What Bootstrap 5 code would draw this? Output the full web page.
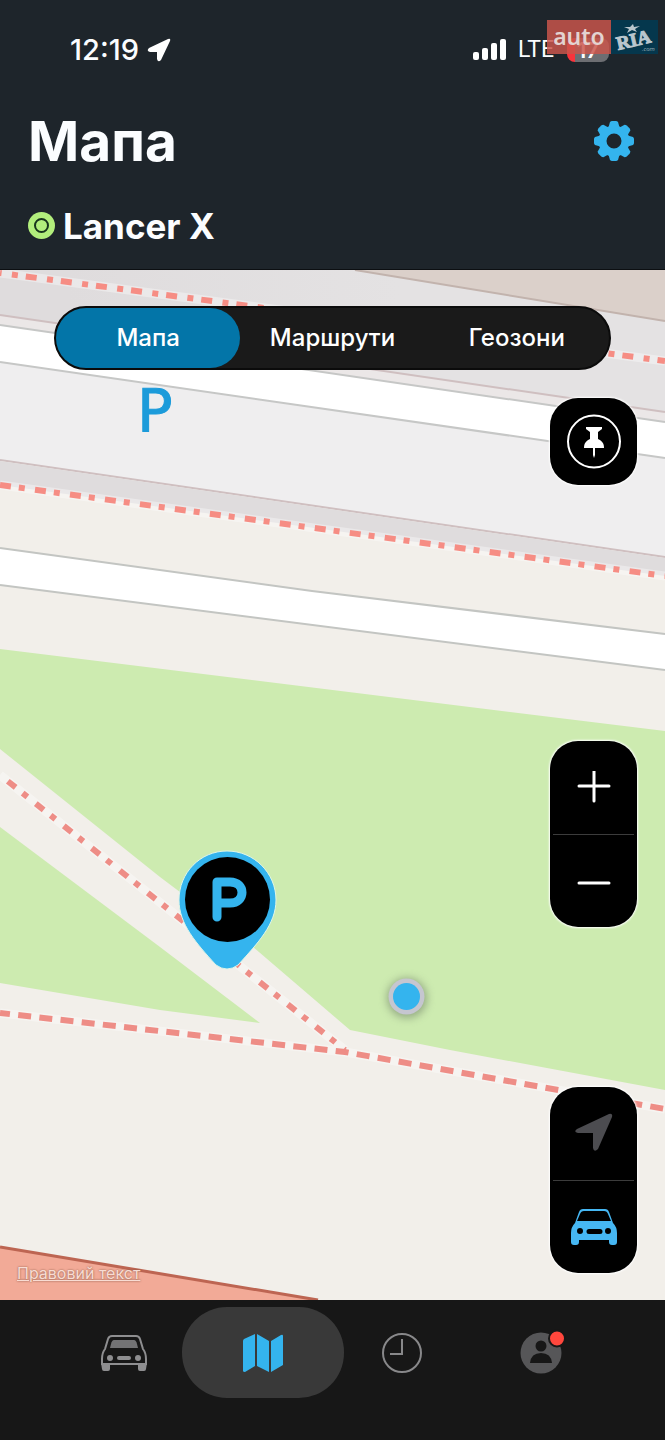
<!DOCTYPE html>
<html lang="uk">
<head>
<meta charset="utf-8">
<meta name="viewport" content="width=device-width, initial-scale=1">
<title>Мапа</title>
<link href="https://cdn.jsdelivr.net/npm/bootstrap@5.3.0/dist/css/bootstrap.min.css" rel="stylesheet">
<style>
:root { --sky: #34b4ee; --ink: #171717; }
body { font-family: Inter, "Noto Sans", sans-serif; background: var(--ink); }
.app-head { background: #1e252b; border-bottom: 1px solid #0c0f12; color: #fbfdff; }
.status-bar { height: 100px; padding: 0 56px 0 70px; }
.clock-time { font-size: 29px; font-weight: 500; line-height: 32px; }
.network { font-family: Roboto, sans-serif; font-size: 23px; line-height: 32px; margin: 0 13px 0 11px; }
.battery { width: 42px; height: 24px; border-radius: 8px; font-size: 22px; font-weight: 600; line-height: 24px; background: linear-gradient(90deg, #f9343c 8px, #6d6e72 8px); }
.watermark { top: 20px; right: 7px; height: 34px; }
.wm-auto { width: 64px; background: rgba(202, 85, 75, .84); color: #e3d3d1; font: 600 23px/32px "Noto Sans", sans-serif; }
.wm-ria { width: 47px; background: #05374d; }
.title-row { height: 82px; padding: 0 28px; }
.page-title { font-size: 55px; font-weight: 700; line-height: 64px; }
.car-row { height: 87px; padding: 0 28px; }
.car-name { font-size: 35px; font-weight: 700; line-height: 40px; }
.map-area { background: #f2efea; isolation: isolate; }
.map-canvas { inset: 0; z-index: -1; }
.map-tabs { margin: 36px 54px 28px; height: 64px; border-radius: 32px; background: #1a1a1a; border: 2px solid #0b0b0b; }
.map-tab { border: 0; background: none; color: #fff; border-radius: 30px; font-size: 24px; font-weight: 500; line-height: 32px; }
.map-tab.active { background: #0375a8; }
.map-tools { width: 87px; margin-right: 28px; }
.tool-box { background: #000; border-radius: 28px; box-shadow: 0 0 2px 1px #fff; padding: 0 3px; }
.tool-btn { border: 0; background: none; padding: 0; height: 93px; display: grid; place-items: center; width: 100%; }
.tool-btn + .tool-btn { border-top: 1px solid #3c3c3c; }
.tool-pin { height: 87px; }
.space-a { flex-grow: 8; }
.space-b { flex-grow: 5; }
.legal { margin-left: 17px; font-size: 16px; line-height: 20px; color: #f8dcd3; text-shadow: 0 0 2px #80503f; margin-bottom: -10px; }
.tool-wrap { margin-bottom: 27px; }
.tab-bar { height: 140px; padding: 7px 54px 0; background: var(--ink); }
.tab-link { height: 91px; isolation: isolate; }
.tab-link.active::before { content: ""; position: absolute; inset: 0 -11px; border-radius: 45px; background: #393939; z-index: -1; }
</style>
</head>
<body>
<div class="d-flex flex-column min-vh-100">
  <header class="app-head">
    <div class="status-bar d-flex align-items-center justify-content-between position-relative">
      <div class="d-flex align-items-center gap-2">
        <span class="clock-time">12:19</span>
        <svg width="24" height="24" viewBox="0 0 24 24" aria-hidden="true"><path d="M2 10 21 1q3-1 2 2L14 22q-3 3-4-1V14H3q-4-1-1-4Z" fill="#fff"/></svg>
      </div>
      <div class="d-flex align-items-center">
        <svg width="34" height="22" viewBox="0 0 34 22" aria-hidden="true" fill="#fff"><rect y="13" width="6" height="8" rx="2"/><rect x="9" y="9" width="6" height="12" rx="2"/><rect x="18" y="4" width="6" height="17" rx="2"/><rect x="27" width="6" height="21" rx="2"/></svg>
        <span class="network">LTE</span>
        <span class="battery text-center">17</span>
      </div>
      <div class="watermark position-absolute d-flex">
        <span class="wm-auto text-center">auto</span>
        <svg class="wm-ria" viewBox="0 0 47 34" role="img" aria-label="RIA.com">
          <text x="7" y="30" transform="rotate(-13 7 30)" font-family="Liberation Serif" font-weight="700" font-size="19" fill="#b9c6cd" stroke="#b9c6cd">RIA</text>
          <path d="m22 4 1 3 6-1-5 3 2 3-5-2-5 3 2-4-5-2h6Z" fill="#b9c6cd"/>
          <text x="31" y="31" font-family="Open Sans" font-size="6" font-style="italic" fill="#9fb2bb">.com</text>
        </svg>
      </div>
    </div>
    <div class="title-row d-flex align-items-center justify-content-between">
      <h1 class="page-title m-0">Мапа</h1>
      <button class="btn p-0 border-0" type="button" aria-label="Налаштування">
        <svg class="d-block" width="44" height="44" viewBox="-21 -22 44 44" fill="#34b4ee">
          <defs><path id="tooth" d="M-6-12-4-19q1-1 2-1h4q1 0 2 1l2 7Z"/></defs>
          <path fill-rule="evenodd" d="M0-15.500A15.500 15.500 0 1 1 0 15.500 15.500 15.500 0 1 1 0-15.500ZM0-7.500A7.500 7.500 0 1 0 0 7.500 7.500 7.500 0 1 0 0-7.500Z"/>
          <use href="#tooth"/><use href="#tooth" transform="rotate(45)"/><use href="#tooth" transform="rotate(90)"/><use href="#tooth" transform="rotate(135)"/><use href="#tooth" transform="rotate(180)"/><use href="#tooth" transform="rotate(225)"/><use href="#tooth" transform="rotate(270)"/><use href="#tooth" transform="rotate(315)"/>
        </svg>
      </button>
    </div>
    <div class="car-row d-flex align-items-center gap-2">
      <svg width="27" height="27" viewBox="0 0 27 27" aria-hidden="true"><circle cx="13.500" cy="13.500" r="13.500" fill="#b2ee7c"/><circle cx="13.500" cy="13.500" r="6.500" fill="none" stroke="#18351d" stroke-width="2"/></svg>
      <span class="car-name">Lancer X</span>
    </div>
  </header>

  <main class="map-area position-relative flex-grow-1 d-flex flex-column">
    <svg class="map-canvas position-absolute w-100 h-100" viewBox="0 270 665 1030" preserveAspectRatio="xMidYMid slice" role="img" aria-label="Мапа місцевості">
      <defs>
        <filter id="glow" x="-60%" y="-60%" width="220%" height="220%"><feGaussianBlur stdDeviation="4"/></filter>
        <linearGradient id="pavement"><stop offset=".1" stop-color="#dfdcdd"/><stop offset=".6" stop-color="#e4e2e3"/></linearGradient>
      </defs>
      <!-- upper streets -->
      <path d="M0 270H665V557L0 460Z" fill="#efeeef"/>
      <path d="M0 270H665V412L0 315Z" fill="url(#pavement)"/>
      <path d="M355 270H665V321Z" fill="#dbd0ca"/>
      <path d="M355 270 665 321" stroke="#c2b3ad" stroke-width="2"/>
      <path d="M0 315 665 412V422L0 325Z" fill="#ebe7e7"/>
      <path d="M0 315 665 412M0 460 665 557" stroke="#cfbfc0" stroke-width="2"/>
      <path d="M0 325 665 422V458L0 362Z" fill="#fff"/>
      <path d="M0 325 665 422M0 362 665 458" stroke="#c6c7c6" stroke-width="2"/>
      <path d="M0 461 665 558V576L0 485Z" fill="#dfdcdd"/>
      <path d="M0 548 312 591 665 634V670L0 585Z" fill="#fff"/>
      <path d="M0 548 312 591 665 634M0 585 665 670" fill="none" stroke="#c3c5c2" stroke-width="2"/>
      <!-- park -->
      <path d="M0 649 665 731V1090L450 1050 350 1030 253 947 160 877 0 749Z" fill="#cdebb0"/>
      <path d="M0 827 160 947 260 1023 160 1010 0 983Z" fill="#cdebb0"/>
      <path d="M0 1247 318 1300H0Z" fill="#f2aa97"/>
      <path d="M0 1247 318 1300" stroke="#bd6552" stroke-width="3"/>
      <!-- footpaths -->
      <g fill="none" stroke="#fff" stroke-opacity=".35" stroke-width="9"><path d="M0 273 665 361M0 485 665 576M0 775 345 1050M0 1013 345 1052 665 1109"/></g>
      <g fill="none" stroke="#f68d84" stroke-width="6">
        <path d="M0 273 665 361" stroke-dasharray="6 8 11 10.400" stroke-dashoffset="-12"/>
        <path d="M0 485 665 576" stroke-dasharray="11 8 6 10.300"/>
        <path d="M0 775 345 1050" stroke-dasharray="10 9 6 10.800" stroke-dashoffset="-10" stroke="#ee8d86"/>
        <path d="M0 1013 345 1052 665 1109" stroke-dasharray="13 8.300" stroke-dashoffset="3" stroke="#ee8d86"/>
      </g>
      <text x="137" y="431" font-family="DejaVu Sans" font-size="59" fill="#1c9bda" stroke="#1c9bda">P</text>
      <!-- parked car -->
      <path d="M227 851C254 851 276 873 276 900C276 924 258 943 238 965Q227 973 216 965C196 943 179 924 179 900C179 873 200 851 227 851Z" fill="#34b4ee" stroke="#dff5e8"/>
      <circle cx="227.500" cy="899.500" r="42.500"/>
      <path d="M217 917V882H230C246 882 246 903 230 903H217" fill="none" stroke="#34b4ee" stroke-width="9" stroke-linecap="round" stroke-linejoin="round"/>
      <!-- own position -->
      <circle cx="407" cy="998" r="20" fill="#6f8068" opacity=".6" filter="url(#glow)"/>
      <circle cx="406.500" cy="996.500" r="18" fill="#c5c6d0"/>
      <circle cx="406.500" cy="996.500" r="13.500" fill="#34b4ee"/>
    </svg>

    <div class="map-tabs d-flex" role="group" aria-label="Розділи">
      <button class="map-tab active flex-fill w-100" type="button">Мапа</button>
      <button class="map-tab flex-fill w-100" type="button">Маршрути</button>
      <button class="map-tab flex-fill w-100" type="button">Геозони</button>
    </div>

    <div class="tool-wrap flex-grow-1 d-flex justify-content-between">
      <a class="legal align-self-end" href="#legal">Правовий текст</a>
      <div class="map-tools d-flex flex-column">
        <div class="tool-box">
          <button class="tool-btn tool-pin" type="button" aria-label="Закріпити">
            <svg width="56" height="56" viewBox="0 0 56 56"><circle cx="28" cy="27.500" r="26" fill="none" stroke="#fff" stroke-width="2"/><path d="M20 13H36V15L32 18V25C36 27 38 29 38 34H29V41L28 44 27 41V34H18C18 29 20 27 24 25V18L20 15Z" fill="#fff"/></svg>
          </button>
        </div>
        <div class="space-a"></div>
        <div class="tool-box">
          <button class="tool-btn" type="button" aria-label="Наблизити"><svg width="34" height="34" viewBox="0 0 34 34"><path d="M2 15H32M17 0V30" stroke="#fff" stroke-width="3" stroke-linecap="round"/></svg></button>
          <button class="tool-btn" type="button" aria-label="Віддалити"><svg width="34" height="34" viewBox="0 0 34 34"><path d="M2 19H32" stroke="#fff" stroke-width="3" stroke-linecap="round"/></svg></button>
        </div>
        <div class="space-b"></div>
        <div class="tool-box">
          <button class="tool-btn" type="button" aria-label="Моє місце"><svg width="40" height="44" viewBox="0 0 40 44"><path d="m3 17 32-15q4-1 3 3L24 37q-4 4-5-1V21H4q-5-1-1-4Z" fill="#4c4c50"/></svg></button>
          <button class="tool-btn" type="button" aria-label="Місце авто"><svg width="48" height="42" viewBox="0 0 48 42"><path fill="#46b7f3" fill-rule="evenodd" d="M13 3H35Q38 3 39 6L43 17Q47 21 47 27V36Q47 39 44 39H42Q39 39 39 36V34H9V36Q9 39 6 39H4Q1 39 1 36V27Q1 21 5 17L9 6Q10 3 13 3ZM14 5Q11 5 10 8L7 15H41L38 8Q37 5 34 5ZM10 22A3 3 0 1 0 10 28 3 3 0 1 0 10 22ZM38 22A3 3 0 1 0 38 28 3 3 0 1 0 38 22ZM19 23A2 2 0 0 0 19 28H30A2 2 0 0 0 30 23Z"/></svg></button>
        </div>
      </div>
    </div>
  </main>

  <nav class="tab-bar d-flex align-items-start" aria-label="Головне меню">
    <a class="tab-link w-100 d-flex align-items-center justify-content-center position-relative" href="#car" aria-label="Авто">
      <svg width="48" height="42" viewBox="0 0 48 42" fill="none" stroke="#8e8e90" stroke-width="2"><path d="M12 4H36Q39 4 40 7L43 17Q46 21 46 27V32H2V27Q2 21 5 17L8 7Q9 4 12 4Z"/><path d="M14 8H34Q36 8 37 12L38 16H10L11 12Q12 8 14 8Z" fill="#737375" stroke="none"/><g fill="#8e8e90" stroke="none"><circle cx="10" cy="26" r="3"/><circle cx="38" cy="26" r="3"/><rect x="17" y="24" width="14" height="4" rx="2"/><path d="M1 31H10V37Q10 39 8 39H4Q2 39 2 37ZM38 31H47L46 37Q46 39 44 39H40Q38 39 38 37Z"/></g></svg>
    </a>
    <a class="tab-link active w-100 d-flex align-items-center justify-content-center position-relative" href="#map" aria-label="Мапа" aria-current="page">
      <svg width="42" height="40" viewBox="0 0 42 40" fill="#34b4ee"><path d="M1 8Q1 7 2 6L13 1V33L3 39Q1 39 1 38ZM15 1 27 8V39L15 33ZM29 8 39 2Q41 1 41 3V32L29 39Z"/></svg>
    </a>
    <a class="tab-link w-100 d-flex align-items-center justify-content-center position-relative" href="#history" aria-label="Історія">
      <svg width="40" height="40" viewBox="0 0 40 40" fill="none" stroke="#88888a" stroke-width="2"><circle cx="20" cy="20" r="19"/><path d="M20 6V21H8"/></svg>
    </a>
    <a class="tab-link w-100 d-flex align-items-center justify-content-center position-relative" href="#profile" aria-label="Профіль">
      <svg class="overflow-visible" width="42" height="42" viewBox="0 0 42 42"><circle cx="21" cy="21" r="20.500" fill="#565658"/><circle cx="21" cy="14" r="5.500" fill="#171717"/><path d="M10 31Q11 21 21 21T32 31Z" fill="#171717"/><circle cx="37" cy="6.500" r="8" fill="#ff473d" stroke="#171717" stroke-width="2"/></svg>
    </a>
  </nav>
</div>
<script src="https://cdn.jsdelivr.net/npm/bootstrap@5.3.0/dist/js/bootstrap.bundle.min.js"></script>
</body>
</html>
